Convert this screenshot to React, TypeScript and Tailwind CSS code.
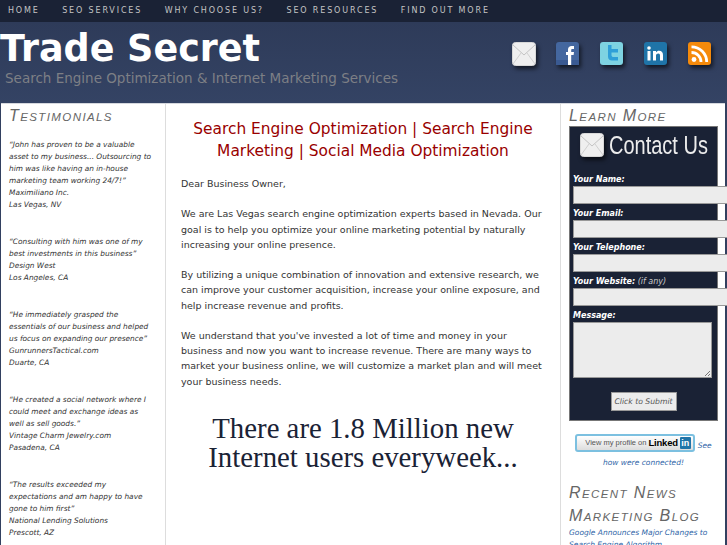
const dv = "font-['DejaVu_Sans',sans-serif]";

function Mail() {
  return (
    <svg width="24" height="24" viewBox="0 0 24 24" className="block shrink-0 drop-shadow-[2px_3px_2px_rgba(0,0,0,0.6)]">
      <rect x="0.5" y="0.5" width="23" height="23" rx="3" fill="#efefef" stroke="#d8d8d8" />
      <path d="M1 3 L12 13 L23 3" fill="none" stroke="#c4c4c4" strokeWidth="1" />
      <path d="M1 22 L9 11 M23 22 L15 11" fill="none" stroke="#d0d0d0" strokeWidth="1" />
    </svg>
  );
}
function Fb() {
  return (
    <svg width="24" height="24" viewBox="0 0 24 24" className="block drop-shadow-[2px_3px_2px_rgba(0,0,0,0.6)]">
      <rect width="23" height="23" rx="3" fill="#44679f" />
      <rect y="18" width="23" height="5" fill="#3a5a92" />
      <path d="M12 23 V13 H10 V10 H12 V7.5 C12 5.2 13.5 4 15.5 4 H18 V7 H16.4 C15.5 7 15.2 7.4 15.2 8.2 V10 H18 L17.6 13 H15.2 V23 Z" fill="#fff" />
    </svg>
  );
}
function Tw() {
  return (
    <svg width="24" height="24" viewBox="0 0 24 24" className="block drop-shadow-[2px_3px_2px_rgba(0,0,0,0.6)]">
      <rect width="23" height="23" rx="3" fill="#7ed3e2" />
      <path d="M8 3 H11.5 V7 H18 V10.5 H11.5 V13 C11.5 14.5 12.3 15 13.5 15 H18 V18.5 H12 C9.5 18.5 8 17 8 14.5 Z" fill="#2f9fd8" />
    </svg>
  );
}
function Li() {
  return (
    <svg width="24" height="24" viewBox="0 0 24 24" className="block drop-shadow-[2px_3px_2px_rgba(0,0,0,0.6)]">
      <rect width="23" height="23" rx="3" fill="#1f74a8" />
      <rect x="3.5" y="9" width="3" height="9.5" fill="#fff" />
      <circle cx="5" cy="6" r="1.8" fill="#fff" />
      <path d="M9 9 H12 V10.4 C12.7 9.3 13.8 8.8 15 8.8 C17.8 8.8 19 10.4 19 13 V18.5 H16 V13.5 C16 12.2 15.5 11.4 14.3 11.4 C13 11.4 12 12.2 12 13.6 V18.5 H9 Z" fill="#fff" />
    </svg>
  );
}
function Rss() {
  return (
    <svg width="24" height="24" viewBox="0 0 24 24" className="block drop-shadow-[2px_3px_2px_rgba(0,0,0,0.6)]">
      <rect width="23" height="23" rx="3" fill="#f58a0b" />
      <circle cx="6" cy="17.5" r="2.4" fill="#fff" />
      <path d="M3.5 10.5 A9.5 9.5 0 0 1 13 20" fill="none" stroke="#fff" strokeWidth="2.8" />
      <path d="M3.5 4.8 A15.2 15.2 0 0 1 18.7 20" fill="none" stroke="#fff" strokeWidth="2.8" />
    </svg>
  );
}

const testimonials = [
  ["\u201CJohn has proven to be a valuable asset to my business... Outsourcing to him was like having an in-house marketing team working 24/7!\u201D", "Maximiliano Inc.", "Las Vegas, NV"],
  ["\u201CConsulting with him was one of my best investments in this business\u201D", "Design West", "Los Angeles, CA"],
  ["\u201CHe immediately grasped the essentials of our business and helped us focus on expanding our presence\u201D", "GunrunnersTactical.com", "Duarte, CA"],
  ["\u201CHe created a social network where I could meet and exchange ideas as well as sell goods.\u201D", "Vintage Charm Jewelry.com", "Pasadena, CA"],
  ["\u201CThe results exceeded my expectations and am happy to have gone to him first\u201D", "National Lending Solutions", "Prescott, AZ"],
];

function Heading({ a, b, c, d }: { a: string; b: string; c?: string; d?: string }) {
  return (
    <div className="font-['Liberation_Sans',sans-serif] italic text-[#666] tracking-[1.4px] leading-[23px] whitespace-nowrap">
      <span className="text-[16px]">{a}</span>
      <span className="text-[11.5px]">{b}</span>
      {c && <span className="text-[16px]"> {c}</span>}
      {d && <span className="text-[11.5px]">{d}</span>}
    </div>
  );
}

function Field({ label, extra }: { label: string; extra?: string }) {
  return (
    <div className="mt-[4px]">
      <div className="text-[8px] leading-[12px] font-bold italic text-white whitespace-nowrap">
        {label}
        {extra && <span className="font-normal text-[#ccc]"> {extra}</span>}
      </div>
      <div className="h-[18px] w-[170px] bg-[#ececec] border border-[#999]" />
    </div>
  );
}

export default function App() {
  return (
    <div className={`${dv} w-[727px] h-[545px] overflow-hidden bg-[#324060]`}>
      <nav className="h-[22px] bg-[#1a2235] flex items-center pl-[8px] gap-[22.5px] text-[8px] tracking-[1.85px] text-[#c4c4c4] whitespace-nowrap">
        <span>HOME</span>
        <span>SEO SERVICES</span>
        <span>WHY CHOOSE US?</span>
        <span>SEO RESOURCES</span>
        <span>FIND OUT MORE</span>
      </nav>
      <header className="h-[81px] flex justify-between bg-gradient-to-b from-[#2e3b59] to-[#344364]">
        <div>
          <h1 className="text-[36.5px] leading-[44px] mt-[5px] font-bold text-white">Trade Secret</h1>
          <p className="text-[13.5px] leading-[16px] -mt-[1px] ml-[5px] text-[#7d7f85]">Search Engine Optimization &amp; Internet Marketing Services</p>
        </div>
        <div className="flex gap-[20px] mt-[20px] mr-[15px]">
          <Mail /><Fb /><Tw /><Li /><Rss />
        </div>
      </header>
      <main className="ml-[1px] mr-[2px] h-[442px] bg-white flex border-t border-[#d5d8de]">
        <aside className="w-[165px] shrink-0 border-r border-[#dddddd] pl-[8px] pr-[11px]">
          <Heading a="T" b="ESTIMONIALS" />
          <div className="mt-[10px] text-[7.4px] leading-[12px] italic text-[#333] flex flex-col gap-[25px]">
            {testimonials.map((t) => (
              <div key={t[1]}>
                <div>{t[0]}</div>
                <div>{t[1]}</div>
                <div>{t[2]}</div>
              </div>
            ))}
          </div>
        </aside>
        <section className="w-[395px] shrink-0 border-r border-[#dddddd] px-[15px]">
          <h2 className="mt-[14px] text-[15.4px] leading-[22px] text-center text-[#990000]">
            Search Engine Optimization | Search Engine Marketing | Social Media Optimization
          </h2>
          <div className="mt-[14px] text-[9.5px] leading-[15.2px] text-[#333] flex flex-col gap-[15.2px]">
            <p>Dear Business Owner,</p>
            <p>We are Las Vegas search engine optimization experts based in Nevada. Our goal is to help you optimize your online marketing potential by naturally increasing your online presence.</p>
            <p>By utilizing a unique combination of innovation and extensive research, we can improve your customer acquisition, increase your online exposure, and help increase revenue and profits.</p>
            <p>We understand that you've invested a lot of time and money in your business and now you want to increase revenue. There are many ways to market your business online, we will customize a market plan and will meet your business needs.</p>
          </div>
          <div className="mt-[25px] font-['Liberation_Serif',serif] text-[28.8px] leading-[29px] text-center text-[#1a2235] whitespace-nowrap">
            There are 1.8 Million new<br />Internet users everyweek...
          </div>
        </section>
        <aside className="flex-1 min-w-0 pl-[8px]">
          <Heading a="L" b="EARN" c="M" d="ORE" />
          <div className="-mt-[3px] w-[149px] h-[295px] bg-[#1a2235] border border-[#777] px-[3px]">
            <div className="flex items-center gap-[5px] mt-[6px] ml-[7px] h-[24px]">
              <Mail />
              <span className="font-['Liberation_Sans',sans-serif] text-[25px] leading-[28px] text-[#ececec] scale-x-[0.8] origin-left whitespace-nowrap">Contact Us</span>
            </div>
            <div className="mt-[17px]">
              <Field label="Your Name:" />
              <Field label="Your Email:" />
              <Field label="Your Telephone:" />
              <Field label="Your Website:" extra="(if any)" />
              <div className="mt-[4px]">
                <div className="text-[8px] leading-[12px] font-bold italic text-white">Message:</div>
                <div className="h-[56px] w-[139px] bg-[#ececec] border border-[#999] flex justify-end items-end">
                  <svg width="7" height="7" viewBox="0 0 7 7" className="block">
                    <path d="M1 6 L6 1 M4 6 L6 4" stroke="#777" strokeWidth="1" fill="none" />
                  </svg>
                </div>
              </div>
            </div>
            <div className="mt-[14px] mx-auto w-[66px] h-[19px] bg-[#ececec] border border-[#999] text-[7.7px] leading-[17px] italic text-[#555] text-center whitespace-nowrap">Click to Submit</div>
          </div>
          <div className="mt-[13px] text-[7.5px] leading-[12px] italic text-[#2f66a8] text-center w-[149px]">
            <span className="inline-flex items-center pl-[8px] w-[120px] h-[18px] mb-[5px] align-middle border-2 border-[#7cc0e0] rounded-[3px] bg-gradient-to-b from-white to-[#dddddd] text-[#555] not-italic font-['Liberation_Sans',sans-serif] text-[7.5px] whitespace-nowrap gap-[2px]">
              View my profile on <b className="text-black text-[9.5px] tracking-[-0.2px]">Linked</b><b className="w-[11px] h-[12px] text-center bg-[#1f74a8] text-white text-[9px] rounded-[1px] leading-[12px]">in</b>
            </span>{" "}
            See<br />how were connected!
          </div>
          <div className="mt-[12px]"><Heading a="R" b="ECENT" c="N" d="EWS" /></div>
          <div className="-mt-[2px]"><Heading a="M" b="ARKETING" c="B" d="LOG" /></div>
          <div className="-mt-[2px] text-[7.5px] leading-[12px] italic text-[#2f66a8] w-[149px]">
            Google Announces Major Changes to Search Engine Algorithm
          </div>
        </aside>
      </main>
    </div>
  );
}
